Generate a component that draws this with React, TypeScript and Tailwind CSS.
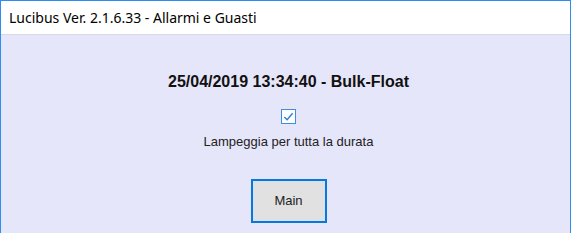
export default function App() {
  return (
    <div className="flex h-[233px] w-[571px] flex-col border-x border-t border-[#2b8ff0] bg-[#e6e6fa]">
      {/* Title bar */}
      <div className="flex h-[34px] shrink-0 items-center border-b border-[#d8d8e4] bg-white pl-[8px] font-['Noto_Sans',sans-serif] text-[14px] text-black">
        Lucibus Ver. 2.1.6.33 - Allarmi e Guasti
      </div>

      {/* Body */}
      <div className="flex flex-1 flex-col items-center pl-[6px] font-['Liberation_Sans',Arial,sans-serif] text-black">
        <p className="mt-[38px] text-[16px] font-bold leading-[18px] text-[#111]">
          25/04/2019 13:34:40 - Bulk-Float
        </p>
        <div className="mt-[18px] flex h-[15px] w-[15px] items-center justify-center border border-[#3c8ee0] bg-white">
          <svg className="h-[11px] w-[11px]" viewBox="0 0 12 12" fill="none" stroke="#2f7fd6" strokeWidth="1.6">
            <polyline points="1.5 6.5 4.5 9.5 10.5 2.5" />
          </svg>
        </div>
        <p className="mt-[10px] text-[13px] leading-[15px] text-[#222]">Lampeggia per tutta la durata</p>
        <button className="mt-[30px] flex h-[44px] w-[76px] shrink-0 items-center justify-center border-2 border-[#0a78d8] bg-[#e1e1e1] text-[13px] text-[#222] shadow-[inset_0_0_0_1px_#cfe3f5]">
          Main
        </button>
      </div>
    </div>
  )
}
